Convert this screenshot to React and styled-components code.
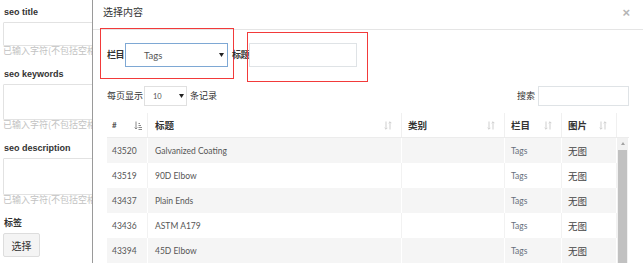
import React from "react"
import styled, { createGlobalStyle, css } from "styled-components"

const GlobalStyle = createGlobalStyle`
    html, body {
        margin: 0;
        padding: 0;
        background: #fff;
    }
    body {
        font-family: "Liberation Sans", "Noto Sans CJK SC", sans-serif;
    }
    * {
        box-sizing: border-box;
    }
`

const cjk = `"Noto Sans CJK SC", "Liberation Sans", sans-serif`
const lato = `Lato, "Noto Sans CJK SC", sans-serif`

const Page = styled.div`
    display: flex;
    width: 643px;
    height: 263px;
    overflow: hidden;
    background: #fff;
`

/* form behind the dialog */
const FormSide = styled.div`
    width: 92px;
    flex-shrink: 0;
    overflow: hidden;
    padding: 6px 0 0 3px;
`

const Field = styled.div`
    width: 200px;
    margin-bottom: 12px;
`

const FieldLabel = styled.div`
    font: bold 9px/12px "Liberation Sans", "Noto Sans CJK SC", sans-serif;
    color: #333;
    margin-bottom: 4px;
    padding-left: 1px;
`

const TextBox = styled.div`
    height: ${props => props.h}px;
    border: 1px solid #e2e2e2;
    border-radius: 1px;
    background: #fff;
`

const Hint = styled.div`
    font: 9px/10px ${cjk};
    color: #c2c2c2;
    white-space: nowrap;
`

const PickButton = styled.button`
    display: block;
    width: 37px;
    height: 24px;
    padding: 0;
    border: 1px solid #ddd;
    border-radius: 2px;
    background: #f4f4f4;
    font: 10px ${cjk};
    color: #333;
`

/* dialog */
const Modal = styled.div`
    flex: 1;
    display: flex;
    flex-direction: column;
    border-left: 1px solid #9a9a9a;
    background: #fff;
    & > * {
        flex-shrink: 0;
    }
`

const ModalHeader = styled.div`
    height: 30px;
    display: flex;
    align-items: center;
    justify-content: space-between;
    padding: 0 13px 5px 10px;
    border-bottom: 1px solid #e5e5e5;
`

const ModalTitle = styled.div`
    font: 10px/14px ${cjk};
    color: #333;
`

const Close = styled.span`
    font: bold 13px/13px "Liberation Sans", sans-serif;
    color: #b5b5b5;
`

const FilterRow = styled.div`
    display: flex;
    align-items: flex-start;
    height: 52px;
    padding-left: 7px;
`

const MarkBox = styled.div`
    display: flex;
    align-items: flex-start;
    border: 1px solid #f23a3a;
    ${props => props.first ? css`
        width: 134px;
        height: 51px;
        margin-top: -2px;
        padding: 14px 0 0 6px;
    ` : css`
        width: 121px;
        height: 50px;
        margin: 2px 0 0 -2px;
        padding: 10px 0 0 1px;
    `}
`

const BoldLabel = styled.span`
    font: bold 9px/24px ${cjk};
    color: #333;
    white-space: nowrap;
    letter-spacing: -0.5px;
    ${props => props.outside && css`
        margin: 13px 0 0 -2px;
    `}
`

const Select = styled.div`
    display: flex;
    align-items: center;
    justify-content: space-between;
    flex-shrink: 0;
    background: #fff;
    border: 1px solid ${props => props.focus ? "#7ea8d4" : "#e0e0e0"};
    width: ${props => props.w}px;
    height: ${props => props.h}px;
    margin-left: ${props => props.ml || 0}px;
    padding: 0 ${props => props.pr}px 0 ${props => props.pl}px;
    font: ${props => props.fs}px ${lato};
    color: #555;
`

const Input = styled.div`
    flex-shrink: 0;
    width: ${props => props.w}px;
    height: ${props => props.h}px;
    margin-left: ${props => props.ml || 0}px;
    border: 1px solid #dfe3e6;
    background: #fff;
`

const Toolbar = styled.div`
    display: flex;
    align-items: center;
    justify-content: space-between;
    height: 20px;
    margin-top: 4px;
    padding: 0 14px;
`

const ToolGroup = styled.div`
    display: flex;
    align-items: center;
`

const ToolText = styled.span`
    font: 9px/20px ${cjk};
    color: #333;
    margin-left: ${props => props.ml || 0}px;
`

const Table = styled.div`
    margin: 7px 14px 0;
`

const cols = "41px 254px 103px 57px 55px"

const HeadRow = styled.div`
    display: grid;
    grid-template-columns: ${cols} 11px;
    height: 25px;
    border-bottom: 1px solid #ececec;
`

const HeadCell = styled.div`
    display: flex;
    align-items: center;
    justify-content: space-between;
    padding: 0 ${props => props.pr || 9}px 0 ${props => props.pl || 6}px;
    border-right: 1px solid #f0f0f0;
    font: bold 9.5px ${cjk};
    color: #333;
`

const HeadHash = styled.span`
    font: bold 8px ${lato};
    color: #555;
`

const BodyWrap = styled.div`
    display: flex;
`

const Rows = styled.div`
    width: 510px;
`

const Row = styled.div`
    display: grid;
    grid-template-columns: ${cols};
    height: 25px;
    background: ${props => props.odd ? "#f5f5f5" : "#fff"};
`

const Cell = styled.div`
    display: flex;
    align-items: center;
    padding-left: ${props => props.pl || 6}px;
    border-right: 1px solid ${props => props.odd ? "#fff" : "#f2f2f2"};
    font: 8.5px ${lato};
    color: ${props => props.c || "#555"};
    white-space: nowrap;
    ${props => props.cjk && css`
        font: 9.5px ${cjk};
        color: #444;
    `}
`

const Scrollbar = styled.div`
    width: 11px;
    display: flex;
    flex-direction: column;
    align-items: center;
    background: #f1f1f1;
`

const ScrollArrow = styled.div`
    height: 12px;
    display: flex;
    align-items: center;
    justify-content: center;
    padding-bottom: 2px;
    &::before {
        content: "";
        border-left: 2.5px solid transparent;
        border-right: 2.5px solid transparent;
        border-bottom: 3px solid #a3a3a3;
    }
`

const ScrollThumb = styled.div`
    flex: 1;
    width: 9px;
    background: #c1c1c1;
`

function Caret() {
    return (
        <svg width="5" height="4" viewBox="0 0 5 4">
            <path d="M0 0H5L2.5 4Z" fill="#222" />
        </svg>
    )
}

function SortIcon({ active }) {
    const c = active ? "#8a8a8a" : "#cfcfcf"
    if (active) {
        return (
            <svg width="8" height="9" viewBox="0 0 8 9">
                <path d="M2 0.5V8M0.6 6.6L2 8L3.4 6.6" stroke={c} strokeWidth="1" fill="none" />
                <path d="M4.5 2.5H6M4.5 4.5H7M4.5 6.5H8M4.5 8.5H8" stroke={c} strokeWidth="1" />
            </svg>
        )
    }
    return (
        <svg width="8" height="9" viewBox="0 0 8 9">
            <path d="M2 0.5V8.2M0.6 6.8L2 8.2L3.4 6.8" stroke={c} strokeWidth="1" fill="none" />
            <path d="M6 8.5V0.8M4.6 2.2L6 0.8L7.4 2.2" stroke={c} strokeWidth="1" fill="none" />
        </svg>
    )
}

const fields = [
    { label: "seo title", h: 24 },
    { label: "seo keywords", h: 36 },
    { label: "seo description", h: 37 },
]

const items = [
    ["43520", "Galvanized Coating"],
    ["43519", "90D Elbow"],
    ["43437", "Plain Ends"],
    ["43436", "ASTM A179"],
    ["43394", "45D Elbow"],
    ["43393", "Seamless Pipe"],
]

export default function App() {
    return (
        <Page>
            <GlobalStyle />
            <FormSide>
                {fields.map(f => (
                    <Field key={f.label}>
                        <FieldLabel>{f.label}</FieldLabel>
                        <TextBox h={f.h} />
                        <Hint>已输入字符(不包括空格)：0</Hint>
                    </Field>
                ))}
                <FieldLabel>标签</FieldLabel>
                <PickButton>选择</PickButton>
            </FormSide>

            <Modal>
                <ModalHeader>
                    <ModalTitle>选择内容</ModalTitle>
                    <Close>×</Close>
                </ModalHeader>

                <FilterRow>
                    <MarkBox first>
                        <BoldLabel>栏目</BoldLabel>
                        <Select focus w={103} h={24} ml={1} pl={18} pr={3} fs={9.5}>
                            <span>Tags</span>
                            <Caret />
                        </Select>
                    </MarkBox>
                    <BoldLabel outside>标题</BoldLabel>
                    <MarkBox>
                        <Input w={108} h={24} />
                    </MarkBox>
                </FilterRow>

                <Toolbar>
                    <ToolGroup>
                        <ToolText>每页显示</ToolText>
                        <Select w={43} h={20} ml={1} pl={8} pr={2} fs={7.5}>
                            <span>10</span>
                            <Caret />
                        </Select>
                        <ToolText ml={3}>条记录</ToolText>
                    </ToolGroup>
                    <ToolGroup>
                        <ToolText>搜索</ToolText>
                        <Input w={91} h={20} ml={3} />
                    </ToolGroup>
                </Toolbar>

                <Table>
                    <HeadRow>
                        <HeadCell pl={5} pr={5}><HeadHash>#</HeadHash><SortIcon active /></HeadCell>
                        <HeadCell pl={7}>标题<SortIcon /></HeadCell>
                        <HeadCell>类别<SortIcon /></HeadCell>
                        <HeadCell>栏目<SortIcon /></HeadCell>
                        <HeadCell>图片<SortIcon /></HeadCell>
                        <div />
                    </HeadRow>
                    <BodyWrap>
                        <Rows>
                            {items.map(([id, title], i) => {
                                const odd = i % 2 === 0
                                return (
                                    <Row key={id} odd={odd}>
                                        <Cell odd={odd} pl={5}>{id}</Cell>
                                        <Cell odd={odd} pl={7}>{title}</Cell>
                                        <Cell odd={odd} />
                                        <Cell odd={odd} c="#66707c">Tags</Cell>
                                        <Cell odd={odd} cjk>无图</Cell>
                                    </Row>
                                )
                            })}
                        </Rows>
                        <Scrollbar>
                            <ScrollArrow />
                            <ScrollThumb />
                        </Scrollbar>
                    </BodyWrap>
                </Table>
            </Modal>
        </Page>
    )
}
